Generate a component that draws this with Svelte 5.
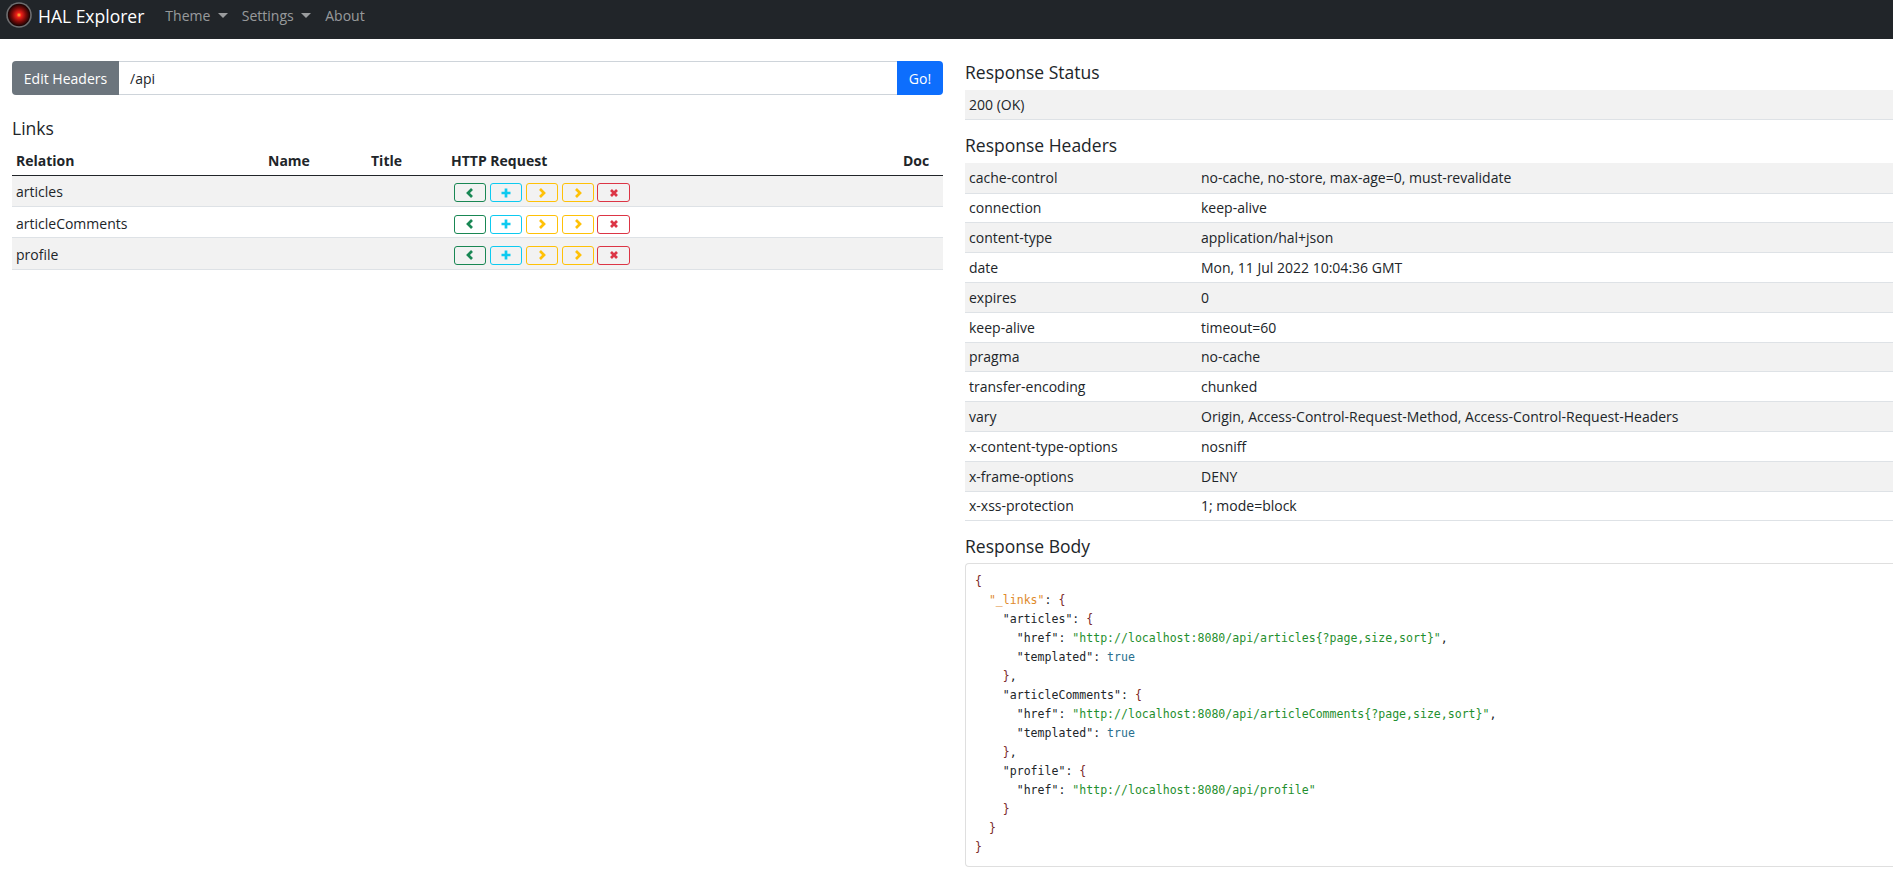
<script>
  const tabs = ['Theme', 'Settings'];
  const links = ['articles', 'articleComments', 'profile'];
  const headers = [
    ['cache-control', 'no-cache, no-store, max-age=0, must-revalidate'],
    ['connection', 'keep-alive'],
    ['content-type', 'application/hal+json'],
    ['date', 'Mon, 11 Jul 2022 10:04:36 GMT'],
    ['expires', '0'],
    ['keep-alive', 'timeout=60'],
    ['pragma', 'no-cache'],
    ['transfer-encoding', 'chunked'],
    ['vary', 'Origin, Access-Control-Request-Method, Access-Control-Request-Headers'],
    ['x-content-type-options', 'nosniff'],
    ['x-frame-options', 'DENY'],
    ['x-xss-protection', '1; mode=block']
  ];
</script>

<nav class="navbar">
  <svg class="logo" viewBox="0 0 26 26" width="26" height="26" aria-hidden="true">
    <defs>
      <radialGradient id="eye" cx="50%" cy="50%" r="50%">
        <stop offset="0" stop-color="#ffc53a" />
        <stop offset="0.22" stop-color="#f0201a" />
        <stop offset="0.62" stop-color="#7a0a08" />
        <stop offset="1" stop-color="#140303" />
      </radialGradient>
    </defs>
    <circle cx="13" cy="13" r="12.8" fill="#6e6e70" />
    <circle cx="13" cy="13" r="11.2" fill="url(#eye)" />
  </svg>
  <span class="brand">HAL Explorer</span>
  {#each tabs as t}
    <span class="nav-item">{t}<i class="caret"></i></span>
  {/each}
  <span class="nav-item">About</span>
</nav>

<main class="page">
  <section class="left">
    <div class="input-group">
      <span class="btn-gray">Edit Headers</span>
      <span class="uri">/api</span>
      <span class="btn-go">Go!</span>
    </div>
    <h5 class="links-title">Links</h5>
    <table class="links">
      <thead>
        <tr>
          <th class="c-rel">Relation</th>
          <th class="c-name">Name</th>
          <th class="c-title">Title</th>
          <th class="c-req">HTTP Request</th>
          <th class="c-doc">Doc</th>
        </tr>
      </thead>
      <tbody>
        {#each links as l}
          <tr>
            <td>{l}</td>
            <td></td>
            <td></td>
            <td>
              <div class="actions">
                <span class="act green">
                  <svg viewBox="0 0 12 12" width="12" height="12"><path d="M8 2 4 6l4 4" /></svg>
                </span>
                <span class="act cyan">
                  <svg viewBox="0 0 12 12" width="12" height="12"><path d="M6 1.5v9M1.5 6h9" /></svg>
                </span>
                <span class="act yellow">
                  <svg viewBox="0 0 12 12" width="12" height="12"><path d="M4 2l4 4-4 4" /></svg>
                </span>
                <span class="act yellow">
                  <svg viewBox="0 0 12 12" width="12" height="12"><path d="M4 2l4 4-4 4" /></svg>
                </span>
                <span class="act red">
                  <svg viewBox="0 0 12 12" width="12" height="12"><path d="M3 3l6 6M9 3l-6 6" /></svg>
                </span>
              </div>
            </td>
            <td></td>
          </tr>
        {/each}
      </tbody>
    </table>
  </section>

  <section class="right">
    <h5>Response Status</h5>
    <table class="info"><tbody><tr class="odd"><td>200 (OK)</td></tr></tbody></table>
    <h5>Response Headers</h5>
    <table class="info">
      <tbody>
        {#each headers as [k, v], i}
          <tr class:odd={i % 2 === 0}><td class="key">{k}</td><td>{v}</td></tr>
        {/each}
      </tbody>
    </table>
    <h5>Response Body</h5>
    <div class="body-card">
<pre><span class="p">&#123;</span>
  <span class="or">"_links"</span><span class="k">: </span><span class="p">&#123;</span>
    <span class="k">"articles": </span><span class="p">&#123;</span>
      <span class="k">"href": </span><span class="g">"http://localhost:8080/api/articles&#123;?page,size,sort&#125;"</span><span class="k">,</span>
      <span class="k">"templated": </span><span class="b">true</span>
    <span class="p">&#125;</span><span class="k">,</span>
    <span class="k">"articleComments": </span><span class="p">&#123;</span>
      <span class="k">"href": </span><span class="g">"http://localhost:8080/api/articleComments&#123;?page,size,sort&#125;"</span><span class="k">,</span>
      <span class="k">"templated": </span><span class="b">true</span>
    <span class="p">&#125;</span><span class="k">,</span>
    <span class="k">"profile": </span><span class="p">&#123;</span>
      <span class="k">"href": </span><span class="g">"http://localhost:8080/api/profile"</span>
    <span class="p">&#125;</span>
  <span class="p">&#125;</span>
<span class="p">&#125;</span></pre>
    </div>
  </section>
</main>

<style>
  :global(body) {
    margin: 0;
    background: #fff;
    color: #212529;
    font-family: "Open Sans", "Noto Sans", sans-serif;
    font-size: 14px;
  }
  .navbar {
    height: 39px;
    background: #212529;
    display: flex;
    align-items: center;
    padding: 0 0 8px 6px;
    box-sizing: border-box;
  }
  .logo { flex: none; margin-top: -2px; }
  .brand {
    color: #fff;
    font-size: 17.5px;
    margin-left: 6px;
    margin-right: 21px;
  }
  .nav-item {
    color: rgba(255, 255, 255, 0.55);
    font-size: 14px;
    margin-right: 14px;
    display: inline-flex;
    align-items: center;
  }
  .caret {
    display: inline-block;
    margin-left: 7.5px;
    border-top: 5px solid rgba(255, 255, 255, 0.55);
    border-left: 5px solid transparent;
    border-right: 5px solid transparent;
  }
  .page {
    display: grid;
    grid-template-columns: 931px 1fr;
    column-gap: 22px;
    padding: 0 0 0 12px;
  }
  .left { padding-top: 22px; }
  .input-group {
    display: flex;
    height: 34px;
    box-sizing: border-box;
  }
  .btn-gray {
    background: #6c757d;
    color: #fff;
    width: 107px;
    display: flex;
    align-items: center;
    justify-content: center;
    border-radius: 4px 0 0 4px;
  }
  .uri {
    flex: 1;
    border: 1px solid #ced4da;
    border-width: 1px 0;
    padding-left: 11px;
    display: flex;
    align-items: center;
  }
  .btn-go {
    background: #0d6efd;
    color: #fff;
    width: 46px;
    display: flex;
    align-items: center;
    justify-content: center;
    border-radius: 0 4px 4px 0;
  }
  h5 {
    margin: 0;
    font-size: 17.5px;
    font-weight: 400;
    line-height: 21px;
  }
  .links-title { margin-top: 23px; }
  table { border-collapse: collapse; width: 100%; }
  .links { margin-top: 8px; table-layout: fixed; }
  .links th {
    text-align: left;
    font-weight: 700;
    padding: 0 4px;
    height: 28px;
    border-bottom: 1.5px solid #212529;
    font-size: 14px;
    box-sizing: border-box;
  }
  .c-rel { width: 252px; }
  .c-name { width: 103px; }
  .c-title { width: 80px; }
  .c-doc { width: 44px; }
  .links td {
    height: 31.4px;
    padding: 2px 4px 0;
    border-bottom: 1px solid #dee2e6;
    box-sizing: border-box;
  }
  .links tbody tr:nth-child(odd) td { background: #f2f2f2; }
  .actions { display: flex; gap: 4px; margin: 2px 0 0 3px; }
  .act {
    width: 32px;
    height: 19px;
    box-sizing: border-box;
    border: 1px solid;
    border-radius: 3px;
    display: flex;
    align-items: center;
    justify-content: center;
  }
  .act svg { fill: none; stroke: currentColor; stroke-width: 2.7; }
  .green { color: #198754; }
  .cyan { color: #0dcaf0; }
  .yellow { color: #ffc107; }
  .red { color: #dc3545; width: 33px; margin-left: -1px; }
  .right { padding-top: 23px; min-width: 0; }
  .info { margin-top: 7px; margin-bottom: 15px; }
  .info td {
    height: 29.8px;
    padding: 0 4px;
    border-bottom: 1px solid #dee2e6;
    box-sizing: border-box;
  }
  .info .key { width: 232px; }
  .odd td { background: #f2f2f2; }
  .body-card {
    margin-top: 6px;
    border: 1px solid #dfdfdf;
    border-right: 0;
    border-radius: 4px 0 0 4px;
    padding: 8px 9px;
    height: 304px;
    box-sizing: border-box;
    overflow: hidden;
  }
  pre {
    margin: 0;
    font-family: "DejaVu Sans Mono", monospace;
    font-size: 11.55px;
    line-height: 19px;
    color: #212529;
  }
  .p { color: #7a2a2a; }
  .or { color: #e08a2c; }
  .k { color: #212529; }
  .g { color: #1f8f2e; }
  .b { color: #2a6f8f; }
</style>
